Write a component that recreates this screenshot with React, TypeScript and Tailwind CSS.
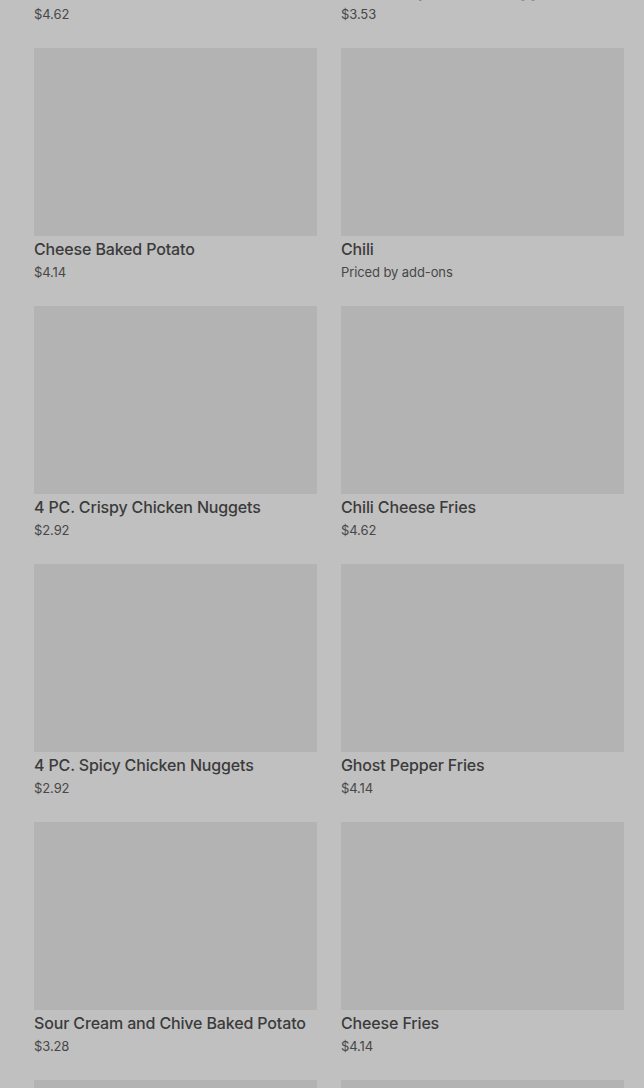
import React from 'react';

type Item = { name: string; price: string };

const items: Item[] = [
  { name: 'Bacon Cheese Fries', price: '$4.62' },
  { name: '8 PC. Spicy Chicken Nuggets', price: '$3.53' },
  { name: 'Cheese Baked Potato', price: '$4.14' },
  { name: 'Chili', price: 'Priced by add-ons' },
  { name: '4 PC. Crispy Chicken Nuggets', price: '$2.92' },
  { name: 'Chili Cheese Fries', price: '$4.62' },
  { name: '4 PC. Spicy Chicken Nuggets', price: '$2.92' },
  { name: 'Ghost Pepper Fries', price: '$4.14' },
  { name: 'Sour Cream and Chive Baked Potato', price: '$3.28' },
  { name: 'Cheese Fries', price: '$4.14' },
];

function MenuCard({ item }: { item?: Item }) {
  return (
    <div className="flex flex-col">
      {/* image placeholder */}
      <div className="h-[188px] w-full bg-[#b3b3b3]" />
      {item && (
        <>
          <p className="mt-[3px] text-[16px] leading-[20px] font-medium tracking-[-0.15px] text-[#3b3b3b] whitespace-nowrap">
            {item.name}
          </p>
          <p className="mt-[4px] text-[13px] leading-[18px] tracking-[-0.1px] text-[#474747]">
            {item.price}
          </p>
        </>
      )}
    </div>
  );
}

export default function App() {
  return (
    <main
      className="w-full h-[1088px] overflow-hidden bg-[#c0c0c0]"
      style={{ fontFamily: 'Inter, "Noto Sans", sans-serif' }}
    >
      <div className="-mt-[210px] pl-[34px] pr-[20px] grid grid-cols-2 gap-x-6 gap-y-[25px]">
        {items.map((item, i) => (
          <MenuCard key={i} item={item} />
        ))}
        {/* next row, only the tops of the images show */}
        <MenuCard />
        <MenuCard />
      </div>
    </main>
  );
}
